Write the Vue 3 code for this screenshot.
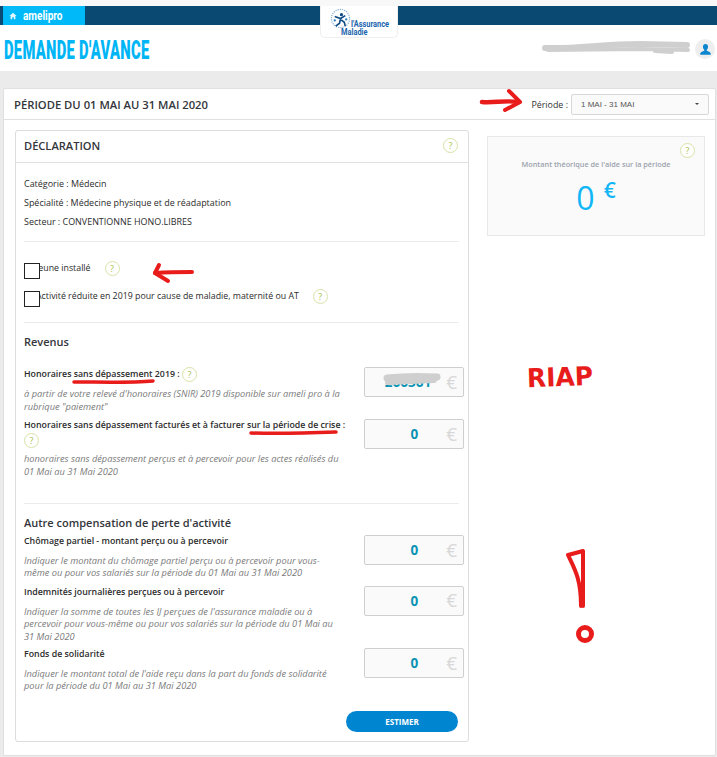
<script setup>
const profile = [
  { label: 'Catégorie :', value: 'Médecin' },
  { label: 'Spécialité :', value: 'Médecine physique et de réadaptation' },
  { label: 'Secteur :', value: 'CONVENTIONNE HONO.LIBRES' },
]
const others = [
  { cls: 'o1', label: 'Chômage partiel - montant perçu ou à percevoir', help: ['Indiquer le montant du chômage partiel perçu ou à percevoir pour vous-', 'même ou pour vos salariés sur la période du 01 Mai au 31 Mai 2020'] },
  { cls: 'o2', label: 'Indemnités journalières perçues ou à percevoir', help: ["Indiquer la somme de toutes les IJ perçues de l'assurance maladie ou à", 'percevoir pour vous-même ou pour vos salariés sur la période du 01 Mai au', '31 Mai 2020'] },
  { cls: 'o3', label: 'Fonds de solidarité', help: ["Indiquer le montant total de l'aide reçu dans la part du fonds de solidarité", 'pour la période du 01 Mai au 31 Mai 2020'] },
]
</script>

<template>
  <div class="page">
    <div class="topstrip"></div>
    <div class="navbar">
      <div class="tab">
        <svg class="home" viewBox="0 0 10 10" width="8" height="8"><path d="M5 1 L9.5 5 H8 V9 H6 V6.5 H4 V9 H2 V5 H.5 Z" fill="#dff6ff"/></svg>
        <span>amelipro</span>
      </div>
    </div>
    <header class="head">
      <h1>DEMANDE D'AVANCE</h1>
      <div class="avatar">
        <svg viewBox="0 0 20 20" width="15" height="15"><path d="M10 2.500c2.200 0 3.400 1.700 3.400 3.800 0 1.700-.8 3.200-1.700 4v1.400c1.800.7 5.300 1.500 5.300 4.300v1H3v-1c0-2.800 3.500-3.600 5.300-4.300v-1.400c-.9-.8-1.700-2.300-1.700-4C6.600 4.200 7.800 2.500 10 2.500z" fill="#0b86cf"/></svg>
      </div>
    </header>

    <div class="logo">
      <svg class="emblem" viewBox="0 0 22 24" width="21" height="23">
        <circle cx="11" cy="12" r="9.500" fill="none" stroke="#7fa8cf" stroke-width="1.200" stroke-dasharray="1.200 1.100"/>
        <circle cx="12" cy="8" r="1.700" fill="#0f4c86"/>
        <path d="M5 10l6 2 5-3M11 12l-1 5-4 3M11 13l4 3 1 4" stroke="#0f4c86" stroke-width="1.700" fill="none"/>
        <circle cx="5" cy="14" r="1.200" fill="#2a7fc1"/>
        <circle cx="17" cy="13" r="1.200" fill="#2a7fc1"/>
      </svg>
      <span class="l1">l'Assurance</span>
      <span class="l2">Maladie</span>
    </div>

    <main class="content">
      <section class="outer">
        <div class="period">
          <h2>PÉRIODE DU 01 MAI AU 31 MAI 2020</h2>
          <div class="picker">
            <span class="plabel">Période :</span>
            <div class="select"><span>1 MAI - 31 MAI</span><i class="caret"></i></div>
          </div>
        </div>

        <div class="columns">
          <section class="decl">
            <div class="decl-head">
              <h3>DÉCLARATION</h3>
              <span class="q">?</span>
            </div>
            <div class="decl-body">
              <div class="profile">
                <p v-for="row in profile" :key="row.label">{{ row.label }} {{ row.value }}</p>
              </div>
              <hr class="h1" />
              <div class="check c1">
                <span class="box"></span><span class="ctext">Jeune installé</span><span class="q">?</span>
              </div>
              <div class="check c2">
                <span class="box"></span><span class="ctext">Activité réduite en 2019 pour cause de maladie, maternité ou AT</span><span class="q">?</span>
              </div>
              <hr class="h2" />
              <h4 class="rev">Revenus</h4>

              <div class="row r1">
                <div class="left">
                  <div class="lab">Honoraires sans dépassement 2019 : <span class="q">?</span></div>
                  <div class="help"><div>à partir de votre relevé d'honoraires (SNIR) 2019 disponible sur ameli pro à la</div><div>rubrique "paiement"</div></div>
                </div>
                <div class="amount"><b class="masked">266361</b><span class="eur">€</span></div>
              </div>

              <div class="row r2">
                <div class="left">
                  <div class="lab">Honoraires sans dépassement facturés et à facturer sur la période de crise :</div>
                  <div class="qline"><span class="q">?</span></div>
                  <div class="help"><div>honoraires sans dépassement perçus et à percevoir pour les actes réalisés du</div><div>01 Mai au 31 Mai 2020</div></div>
                </div>
                <div class="amount"><b>0</b><span class="eur">€</span></div>
              </div>

              <hr class="h3" />
              <h4 class="aut">Autre compensation de perte d'activité</h4>

              <div v-for="o in others" :key="o.label" class="row" :class="o.cls">
                <div class="left">
                  <div class="lab">{{ o.label }}</div>
                  <div class="help h-o"><div v-for="line in o.help" :key="line">{{ line }}</div></div>
                </div>
                <div class="amount"><b>0</b><span class="eur">€</span></div>
              </div>

              <div class="actions"><button type="button">ESTIMER</button></div>
            </div>
          </section>

          <aside class="estimate">
            <span class="q corner">?</span>
            <p>Montant théorique de l'aide sur la période</p>
            <div class="big"><span>0</span><sup>€</sup></div>
          </aside>
        </div>
      </section>
    </main>

    <svg class="marks" viewBox="0 0 717 757" width="717" height="757" aria-hidden="true">
      <g fill="none" stroke="#cfcfcf" stroke-linecap="round">
        <path d="M545 48 C580 49 600 44 640 44 L687 45" stroke-width="6"/>
        <path d="M548 50 L640 49 L688 50" stroke-width="4"/>
        <path d="M655 51 L672 52" stroke-width="4"/>
        <path d="M387 378 C405 376 420 376 437 377" stroke-width="7"/>
        <path d="M388 382 L434 380" stroke-width="6"/>
      </g>
      <g fill="none" stroke="#e91c1c" stroke-linecap="round" stroke-linejoin="round">
        <path d="M482 102 C495 103 505 100 519 102" stroke-width="4.500"/>
        <path d="M509 91 L520 102 L505 110" stroke-width="4"/>
        <path d="M192 272 C180 272 170 272 155 273" stroke-width="4"/>
        <path d="M159 265 L155 273 L168 281" stroke-width="4"/>
        <path d="M74 382 C100 382 130 383 153 381" stroke-width="3.500"/>
        <path d="M251 433 C280 434 310 433 336 432" stroke-width="3.500"/>
        <path d="M568 555 L583 551 L583 606 M568 555 C574 568 581 578 581 606" stroke-width="4"/>
        <ellipse cx="585" cy="634" rx="6.500" ry="6.500" stroke-width="5"/>
      </g>
      <text class="riap" x="527" y="386" textLength="66" lengthAdjust="spacingAndGlyphs" transform="rotate(-2 560 378)">RIAP</text>
    </svg>
  </div>
</template>

<style>
html, body { margin: 0; background: #fff; }
</style>

<style scoped>
.page {
  position: relative;
  width: 717px;
  height: 757px;
  overflow: hidden;
  background: #ebebeb;
  font-family: "Open Sans", "Noto Sans", sans-serif;
  font-size: 8.950px;
  color: #2b2b2b;
}
.topstrip { height: 6px; background: #f8f8f8; }
.navbar { height: 19px; background: #0a4972; padding-left: 3px; }
.tab {
  width: 82px;
  height: 19px;
  background: #00b9f8;
  color: #fff;
  display: flex;
  align-items: center;
  gap: 6px;
  padding-left: 6px;
  box-sizing: border-box;
}
.tab span {
  font-family: "Roboto", sans-serif;
  font-weight: 700;
  font-size: 12.500px;
  transform: scaleX(.8);
  transform-origin: left center;
}
.head {
  height: 46px;
  background: #fff;
  display: flex;
  align-items: center;
  justify-content: space-between;
  padding: 0 2px 0 4px;
}
.head h1 {
  margin: 4px 0 0;
  font-family: "Roboto", sans-serif;
  font-weight: 900;
  font-size: 25px;
  letter-spacing: .5px;
  color: #00b5f5;
  line-height: 1;
  white-space: nowrap;
  transform: scaleX(.59);
  transform-origin: left center;
}
.avatar {
  width: 20px;
  height: 20px;
  border-radius: 50%;
  background: #eeeeee;
  display: flex;
  align-items: center;
  justify-content: center;
  margin-top: 2px;
}
.logo {
  position: absolute;
  left: 320px;
  top: 6px;
  width: 78px;
  height: 32px;
  box-sizing: border-box;
  background: #fff;
  border: 1px solid #eeeeee;
  border-top: 0;
  border-radius: 0 0 5px 5px;
  color: #1c66ad;
  font-family: "Roboto", sans-serif;
  font-weight: 700;
}
.emblem { position: absolute; left: 9px; top: 1px; }
.l1, .l2 {
  position: absolute;
  font-size: 9.500px;
  line-height: 8px;
  white-space: nowrap;
  transform: scaleX(.78);
  transform-origin: left center;
}
.l1 { left: 30px; top: 14px; }
.l2 { left: 20px; top: 22px; }

.content { padding: 17px 1px 0 3px; }
.outer {
  height: 668px;
  box-sizing: border-box;
  background: #fff;
  border: 1px solid #e0e0e0;
  border-radius: 2px;
}
.period {
  height: 31px;
  box-sizing: border-box;
  border-bottom: 1px solid #e0e0e0;
  display: flex;
  align-items: center;
  justify-content: space-between;
  padding: 0 6px 0 10px;
}
.period h2 {
  margin: 0;
  font-size: 11.250px;
  font-weight: 600;
  color: #33363b;
}
.picker { display: flex; align-items: center; gap: 3px; }
.plabel { color: #333; font-size: 8.900px; font-family: "Open Sans", sans-serif; }
.select {
  width: 138px;
  height: 21px;
  box-sizing: border-box;
  background: #fafafa;
  border: 1px solid #d8d8d8;
  border-radius: 2px;
  display: flex;
  align-items: center;
  justify-content: space-between;
  padding: 0 9px;
  font-family: "Liberation Sans", sans-serif;
  font-size: 8px;
  color: #555;
}
.caret {
  width: 0;
  height: 0;
  border-left: 2px solid transparent;
  border-right: 2px solid transparent;
  border-top: 2px solid #444;
}
.columns { display: flex; align-items: flex-start; padding: 10px 0 0 11px; }
.decl {
  width: 454px;
  height: 612px;
  box-sizing: border-box;
  border: 1px solid #dcdcdc;
  border-radius: 3px;
  flex: none;
}
.decl-head {
  height: 32px;
  box-sizing: border-box;
  border-bottom: 1px solid #e2e2e2;
  display: flex;
  align-items: center;
  justify-content: space-between;
  padding: 0 10px 2px 8px;
}
.decl-head h3 { margin: 0; font-size: 11.100px; font-weight: 600; color: #33363b; }
.q {
  display: inline-flex;
  width: 15px;
  height: 15px;
  box-sizing: border-box;
  border: 1px solid #d7e3a8;
  border-radius: 50%;
  align-items: center;
  justify-content: center;
  color: #a6c24a;
  font-size: 9px;
  font-weight: 400;
  line-height: 1;
  vertical-align: middle;
  background: #fff;
}
.decl-body { padding: 0 9px 0 8px; }
.profile { padding: 11px 0 10px; }
.profile p { margin: 0; height: 19px; line-height: 19px; }
hr { border: 0; border-top: 1px solid #ececec; margin: 0; }
.check { display: flex; align-items: center; position: relative; height: 16px; }
.c1 { margin-top: 20px; }
.c2 { margin-top: 12px; }
.box {
  position: absolute;
  left: 0;
  top: 1px;
  width: 16px;
  height: 16px;
  box-sizing: border-box;
  border: 1px solid #222;
  background: #fff;
}
.ctext { padding-left: 12px; white-space: nowrap; margin-top: -4px; font-size: 8.800px; }
.check .q { margin-left: 14px; margin-top: -3px; }
.h2 { margin-top: 16px; }
.rev, .aut { margin: 0; font-weight: 600; color: #33363b; font-size: 11px; line-height: 15px; }
.rev { margin-top: 11px; }
.row { display: flex; justify-content: space-between; position: relative; margin-right: -5px; }
.left { width: 332px; }
.lab { font-weight: 600; color: #2c2c2c; font-size: 8.800px; line-height: 13px; white-space: nowrap; }
.help { color: #7a7a7a; font-style: italic; font-size: 9.250px; line-height: 13px; white-space: nowrap; }
.amount {
  width: 100px;
  height: 30px;
  box-sizing: border-box;
  background: #fafafa;
  border: 1px solid #cfcfcf;
  border-radius: 2px;
  display: flex;
  align-items: center;
  justify-content: flex-end;
  padding-right: 6px;
  flex: none;
}
.amount b {
  color: #0a93b3;
  font-size: 13.500px;
  font-weight: 700;
  margin-right: 28px;
}
.amount .masked { margin-right: 15px; }
.eur { color: #d8d8d8; font-size: 19px; line-height: 1; }
.r1 { margin-top: 18px; }
.r1 .help { margin-top: 5px; }
.r2 { margin-top: 6px; }
.qline { height: 15px; margin-top: 1px; }
.r2 .help { margin-top: 4px; }
.h3 { margin-top: 25px; }
.aut { margin-top: 11px; }
.o1 { margin-top: 5px; }
.o2 { margin-top: 6px; }
.o3 { margin-top: 5px; }
.h-o { margin-top: 7px; line-height: 12.400px; }
.actions { display: flex; justify-content: flex-end; margin: 18px 1px 0 0; }
button {
  width: 112px;
  height: 21px;
  border: 0;
  border-radius: 11px;
  background: #0086d0;
  color: #fff;
  font-family: inherit;
  font-size: 8px;
  font-weight: 700;
  padding: 0;
}
.estimate {
  position: relative;
  width: 218px;
  height: 100px;
  box-sizing: border-box;
  margin: 6px 0 0 18px;
  background: #fafafa;
  border: 1px solid #e8e8e8;
  text-align: center;
}
.corner { position: absolute; right: 9px; top: 6px; }
.estimate p {
  margin: 22px 0 0;
  font-size: 7.300px;
  font-weight: 600;
  color: #9aa3ad;
}
.big {
  display: flex;
  justify-content: center;
  color: #11b6f7;
  line-height: 1;
  margin-top: 13px;
}
.big span { font-size: 32px; }
.big sup { font-size: 21px; font-weight: 600; line-height: 1; margin-left: 9px; margin-top: -2px; }

.marks { position: absolute; left: 0; top: 0; pointer-events: none; }
.riap {
  font-family: "DejaVu Sans", sans-serif;
  font-weight: 700;
  font-size: 26px;
  fill: #e91c1c;
}
</style>
